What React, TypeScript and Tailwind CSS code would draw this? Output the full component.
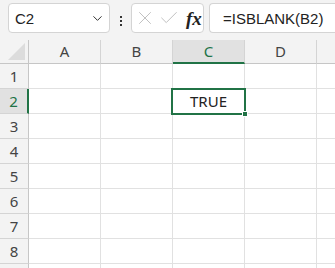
import { ChevronDown, X, Check } from "lucide-react";

const cols = ["A", "B", "C", "D", ""];
const rows = [1, 2, 3, 4, 5, 6, 7, 8, 0];

const GREEN = "#217346";

export default function App() {
  return (
    <div
      className="w-[335px] h-[268px] overflow-hidden bg-white text-[#222]"
      style={{ fontFamily: '"Noto Sans", "Liberation Sans", sans-serif' }}
    >
      {/* formula bar */}
      <div className="flex h-[40px] bg-[#f3f3f3] pt-[3px]">
        <div className="ml-[8px] flex h-[30px] w-[102px] items-center rounded-[4px] border border-[#d4d4d4] bg-white pl-[6px] pr-[4px]">
          <span className="flex-1 text-[15px] leading-none" style={{ fontFamily: '"Liberation Sans", sans-serif' }}>
            C2
          </span>
          <ChevronDown size={15} strokeWidth={1.6} className="text-[#333]" />
        </div>
        <div className="flex w-[21px] flex-col items-center justify-center gap-[2px] pb-[1px]">
          <span className="h-[2px] w-[2px] bg-[#333]" />
          <span className="h-[2px] w-[2px] bg-[#333]" />
          <span className="h-[2px] w-[2px] bg-[#333]" />
        </div>
        <div className="flex h-[30px] w-[73px] items-center rounded-[4px] border border-[#d4d4d4] bg-white pl-[2px]">
          <X size={22} strokeWidth={0.9} className="text-[#b4b4b4]" />
          <Check size={22} strokeWidth={0.9} className="ml-[2px] text-[#b4b4b4]" />
          <span
            className="ml-[6px] text-[19px] font-bold italic leading-none text-[#222]"
            style={{ fontFamily: '"Liberation Serif", serif' }}
          >
            fx
          </span>
        </div>
        <div className="ml-[5px] flex h-[30px] flex-1 items-center rounded-l-[4px] border border-r-0 border-[#d4d4d4] bg-white pl-[13px]">
          <span className="whitespace-nowrap text-[15px] leading-none" style={{ fontFamily: '"Liberation Sans", sans-serif' }}>
            =ISBLANK(B2)
          </span>
        </div>
      </div>

      {/* grid */}
      <div className="grid grid-cols-[29px_72px_72px_72px_72px_72px]">
        {/* corner */}
        <div className="flex h-[24px] items-end justify-end border-r border-b border-[#c6c6c6] bg-[#f3f3f3] pr-[3px] pb-[3px]">
          <svg width="17" height="17" viewBox="0 0 17 17">
            <polygon points="17,0 17,17 0,17" fill="#dcdcdc" />
          </svg>
        </div>
        {cols.map((c, i) => {
          const sel = c === "C";
          return (
            <div
              key={i}
              className={
                sel
                  ? "flex h-[24px] items-center justify-center border-r border-[#d4d4d4] border-b-2 border-b-[#217346] bg-[#e1e1e1] text-[15px] text-[#217346]"
                  : "flex h-[24px] items-center justify-center border-r border-b border-[#d4d4d4] border-b-[#c6c6c6] bg-[#f3f3f3] text-[15px] text-[#444]"
              }
            >
              {c}
            </div>
          );
        })}

        {rows.map((r, i) => (
          <RowCells key={i} r={r} />
        ))}
      </div>
    </div>
  );
}

function RowCells({ r }: { r: number }) {
  const selRow = r === 2;
  return (
    <>
      <div
        className={
          selRow
            ? "flex h-[25px] items-center justify-center border-b border-[#d4d4d4] border-r-2 border-r-[#217346] bg-[#e1e1e1] text-[15px] text-[#217346]"
            : "flex h-[25px] items-center justify-center border-b border-[#d4d4d4] border-r border-r-[#c6c6c6] bg-[#f3f3f3] text-[15px] text-[#444]"
        }
      >
        {r > 0 ? r : ""}
      </div>
      {cols.map((c, i) => {
        const active = selRow && c === "C";
        return (
          <div key={i} className="relative h-[25px] border-r border-b border-[#e1e1e1]">
            {active && (
              <div
                className="absolute -left-[2px] -top-[1px] z-10 flex h-[27px] w-[75px] items-center justify-center border-2 bg-white text-[15px]"
                style={{ borderColor: GREEN }}
              >
                TRUE
                <span className="absolute -bottom-[4px] -right-[4px] h-[6px] w-[6px] border border-white bg-[#217346]" />
              </div>
            )}
          </div>
        );
      })}
    </>
  );
}
